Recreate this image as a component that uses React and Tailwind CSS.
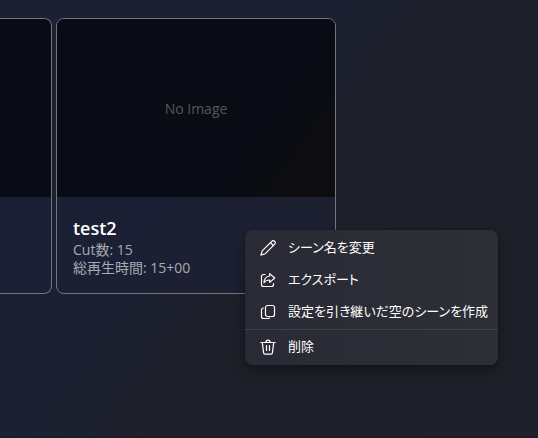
const stroke = {
  width: 16,
  height: 16,
  viewBox: "0 0 16 16",
  fill: "none",
  stroke: "currentColor",
  strokeWidth: 1.2,
  strokeLinecap: "round",
  strokeLinejoin: "round",
  className: "shrink-0",
  "aria-hidden": true,
};

function PencilIcon() {
  return (
    <svg {...stroke}>
      <path d="M11.9 1.300a1.900 1.900 0 0 1 2.800 2.800L5.100 13.800 0.900 15.100 2.200 10.900z" />
      <path d="M10.500 2.700l2.800 2.800" />
    </svg>
  );
}

function ShareIcon() {
  return (
    <svg {...stroke}>
      <path d="M5 2.500H3.500a2 2 0 0 0-2 2v8a2 2 0 0 0 2 2h8a2 2 0 0 0 2-2v-1" />
      <path d="M9.700 1.600l5 4.400-5 4.400V8c-2.700 0-4.300.8-5.700 2.700 .2-3.700 2.200-6.300 5.700-6.700z" />
    </svg>
  );
}

function CopyIcon() {
  return (
    <svg {...stroke}>
      <rect x="5.500" y="1.500" width="9" height="11" rx="2" />
      <path d="M3.500 4a2 2 0 0 0-2 2v6.500a2 2 0 0 0 2 2h4.700a2 2 0 0 0 1.500-.6" />
    </svg>
  );
}

function TrashIcon() {
  return (
    <svg {...stroke}>
      <path d="M.8 3.500h14.400" />
      <path d="M5.900 3.300a2.100 2.100 0 0 1 4.200 0" />
      <path d="M2.300 3.700l1.300 10.200a1.500 1.500 0 0 0 1.500 1.300h5.800a1.500 1.500 0 0 0 1.500-1.300l1.300-10.200" />
      <path d="M6.500 6.500v5M9.500 6.500v5" />
    </svg>
  );
}

function SceneCard({ title, cuts, duration }) {
  return (
    <article className="w-70 shrink-0 overflow-hidden rounded-lg border border-[#74767f] bg-[#1d2135]/60">
      <div className="flex h-[178px] items-center justify-center bg-[linear-gradient(126deg,#090c14_72%,#0d0d10_88%)] pt-0.5 text-sm text-[#55575c]">
        No Image
      </div>
      <div className="px-4 pt-[18px] pb-4">
        <h2 className="text-lg leading-[26px] font-semibold text-white">{title}</h2>
        <p className="text-sm leading-[18px] text-[#a9abb2]">Cut数: {cuts}</p>
        <p className="text-sm leading-[18px] text-[#a9abb2]">総再生時間: {duration}</p>
      </div>
    </article>
  );
}

function PreviousCardEdge() {
  return (
    <div className="w-[52px] shrink-0 overflow-hidden rounded-r-lg border border-l-0 border-[#74767f] bg-[#1d2135]/60">
      <div className="h-[178px] bg-[#090c14]" />
    </div>
  );
}

function MenuItem({ icon, children }) {
  return (
    <button
      type="button"
      role="menuitem"
      className="flex h-8 w-full items-center gap-3 pl-[15px] text-left text-[13px] whitespace-nowrap text-white"
    >
      {icon}
      <span>{children}</span>
    </button>
  );
}

export default function App() {
  return (
    <main className="relative flex min-h-screen flex-col overflow-hidden bg-[linear-gradient(126deg,#1b2033_36%,#1e2029_55%,#1e2129_100%)] font-['Open_Sans','Noto_Sans_CJK_JP',sans-serif]">
      <section className="grow pt-[18px]">
        <div className="flex gap-1">
          <PreviousCardEdge />
          <SceneCard title="test2" cuts="15" duration="15+00" />
        </div>
      </section>
      <div className="h-0.5 bg-[#1f1b28]" />
      <div
        role="menu"
        className="absolute top-[230px] left-[245px] w-[253px] rounded-lg bg-linear-to-r from-[#292a35] to-[#2d2f36] py-0.5 shadow-[0_6px_14px_rgba(0,0,0,0.35),0_0_2px_rgba(0,0,0,0.4)] [font-feature-settings:'palt']"
      >
        <MenuItem icon={<PencilIcon />}>シーン名を変更</MenuItem>
        <MenuItem icon={<ShareIcon />}>エクスポート</MenuItem>
        <MenuItem icon={<CopyIcon />}>設定を引き継いだ空のシーンを作成</MenuItem>
        <hr className="my-px border-t border-[#404149]" />
        <MenuItem icon={<TrashIcon />}>削除</MenuItem>
      </div>
    </main>
  );
}
